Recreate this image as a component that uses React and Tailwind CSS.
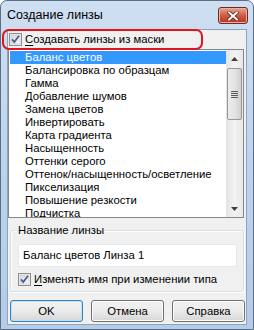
import React from "react";

const items = [
  "Баланс цветов",
  "Балансировка по образцам",
  "Гамма",
  "Добавление шумов",
  "Замена цветов",
  "Инвертировать",
  "Карта градиента",
  "Насыщенность",
  "Оттенки серого",
  "Оттенок/насыщенность/осветление",
  "Пикселизация",
  "Повышение резкости",
  "Подчистка",
];

function Check() {
  return (
    <svg width="13" height="13" viewBox="0 0 13 13" className="shrink-0">
      <defs>
        <linearGradient id="cbg" x1="0" y1="0" x2="1" y2="1">
          <stop offset="0" stopColor="#d8d8d8" />
          <stop offset="1" stopColor="#fafafa" />
        </linearGradient>
      </defs>
      <rect x="0.5" y="0.5" width="12" height="12" fill="#f4f4f4" stroke="#8e8f8f" />
      <rect x="2" y="2" width="9" height="9" fill="url(#cbg)" stroke="#c4c4c4" strokeWidth="0.6" />
      <path d="M3 6.3 L5.3 9 L10 2.8" fill="none" stroke="#4a5f97" strokeWidth="1.8" />
    </svg>
  );
}

function Btn({ children, def }) {
  return (
    <div
      className={
        "w-[73px] h-[22px] rounded-[3px] flex items-center justify-center text-black bg-gradient-to-b from-[#f2f2f2] via-[#ebebeb] to-[#d6d6d6] " +
        (def
          ? "border border-[#3c7fb1] shadow-[inset_0_0_0_1px_#b8e3f8]"
          : "border border-[#707070] shadow-[inset_0_0_0_1px_#fcfcfc]")
      }
    >
      {children}
    </div>
  );
}

export default function App() {
  return (
    <div
      className="relative w-[254px] h-[330px] rounded-t-[7px] border border-[#5a6f86] bg-gradient-to-b from-[#cfdff2] via-[#bcd3ee] to-[#b4cce8] flex flex-col"
      style={{ fontFamily: '"Liberation Sans", Arial, sans-serif' }}
    >
      <div className="h-[28px] flex items-center pl-[6px] pr-[5px] shrink-0">
        <span className="text-[12.5px] text-black pt-[1px]">Создание линзы</span>
        <div className="ml-auto mt-[1px] w-[30px] h-[17px] rounded-[3px] border border-[#6d2a24] bg-gradient-to-b from-[#e8a493] via-[#cf5a42] to-[#b8331f] flex items-center justify-center shadow-[inset_0_0_0_1px_#eab0a4]">
          <svg width="12" height="10" viewBox="0 0 12 10">
            <path d="M2 1.5 L10 8.5 M10 1.5 L2 8.5" stroke="#4a1d16" strokeWidth="3.2" strokeLinecap="square" />
            <path d="M2 1.5 L10 8.5 M10 1.5 L2 8.5" stroke="#ffffff" strokeWidth="2" strokeLinecap="square" />
          </svg>
        </div>
      </div>
      <div className="mx-[6px] h-[296px] bg-[#f0f0f0] border border-[#8ea4bd] flex flex-col text-[11.3px] text-black">
        <div className="flex items-center h-[18px] pl-[1px] pt-[1px]">
          <Check />
          <span className="ml-[3px] leading-none">
            <span className="underline underline-offset-[2px]">С</span>оздавать линзы из маски
          </span>
        </div>
        <div className="mt-[1px] ml-0 w-[236px] h-[169px] border border-[#828790] bg-white flex">
          <div className="flex-1 overflow-hidden p-[1px] pr-0">
            {items.map((t, i) => (
              <div
                key={t}
                className={
                  "h-[13px] leading-[13px] pl-[15px] whitespace-nowrap " +
                  (i === 0 ? "bg-[#3399ff] text-white" : "")
                }
              >
                {t}
              </div>
            ))}
          </div>
          <div className="w-[17px] bg-gradient-to-r from-[#e3e3e3] via-[#f3f3f3] to-[#e8e8e8] flex flex-col items-center">
            <div className="h-[17px] w-full flex items-center justify-center">
              <svg width="7" height="4" viewBox="0 0 7 4"><path d="M0 4 L3.5 0 L7 4 Z" fill="#404040" /></svg>
            </div>
            <div className="mt-[1px] w-[15px] h-[52px] rounded-[2px] border border-[#979797] bg-gradient-to-r from-[#ececec] via-[#e4e4e4] to-[#cfcfcf] flex flex-col items-center justify-center gap-[1px]">
              <div className="w-[7px] h-[1px] bg-[#5a5a5a]" />
              <div className="w-[7px] h-[1px] bg-[#5a5a5a]" />
              <div className="w-[7px] h-[1px] bg-[#5a5a5a]" />
              <div className="w-[7px] h-[1px] bg-[#5a5a5a]" />
            </div>
            <div className="mt-auto h-[17px] w-full flex items-center justify-center">
              <svg width="7" height="4" viewBox="0 0 7 4"><path d="M0 0 L3.5 4 L7 0 Z" fill="#404040" /></svg>
            </div>
          </div>
        </div>
        <div className="relative mt-[12px] ml-[2px] w-[234px] h-[62px] border border-[#d5dfe5] rounded-[3px] shadow-[inset_1px_1px_0_#ffffff,1px_1px_0_#ffffff] flex flex-col px-[7px]">
          <span className="absolute -top-[8px] left-[6px] px-[1px] bg-[#f0f0f0] leading-[14px]">Название линзы</span>
          <div className="mt-[13px] h-[23px] w-[219px] border border-[#e3e9ef] bg-white flex items-center pl-[4px]">
            Баланс цветов Линза 1
          </div>
          <div className="mt-[6px] flex items-center">
            <Check />
            <span className="ml-[3px] leading-none">
              <span className="underline underline-offset-[2px]">И</span>зменять имя при изменении типа
            </span>
          </div>
        </div>
        <div className="mt-[8px] ml-[2px] flex gap-[8px]">
          <Btn def>OK</Btn>
          <Btn>Отмена</Btn>
          <Btn>Справка</Btn>
        </div>
      </div>
      <div className="absolute left-[1px] top-[28px] w-[201px] h-[21px] rounded-[7px] border-2 border-[#e3141c] pointer-events-none" />
    </div>
  );
}
